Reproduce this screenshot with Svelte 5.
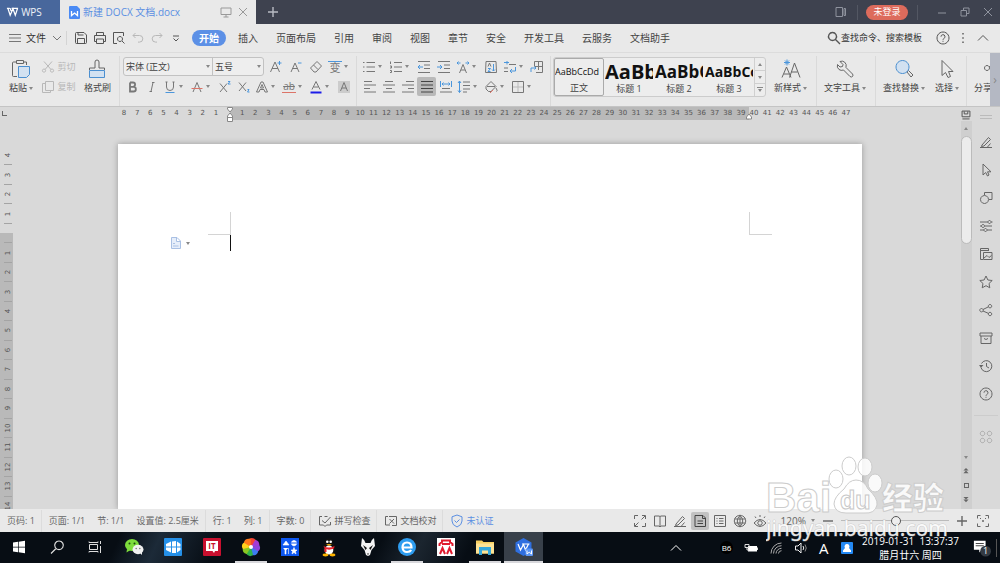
<script>
  const tabs = ['开始', '插入', '页面布局', '引用', '审阅', '视图', '章节', '安全', '开发工具', '云服务', '文档助手'];
  let activeTab = $state('开始');
  let font = $state('宋体 (正文)');
  let size = $state('五号');
  let style = $state('正文');
  let zoom = $state(120);

  // each icon is a list of [path, class], drawn on a 14 x 14 grid
  const icons = {
    menu: [['M1 3.5H13M1 7H13M1 10.5H13']],
    save: [['M1.5 2.5a1 1 0 0 1 1-1H10L12.5 4V11.500a1 1 0 0 1-1 1h-9a1 1 0 0 1-1-1ZM4 1.500V4H9.500M3.500 12.500V7.500H10.500V12.500']],
    print: [['M3.500 4.500V1.500H10.500V4.500M3.500 10.500H1.500V4.500H12.500V10.500H10.500M3.500 8H10.500V12.500H3.500Z']],
    preview: [['M5 12.500H1.500V1.500H11.500V5'], ['M8 5.500a2.500 2.500 0 1 0 .01 0M10 10L12.500 12.500']],
    undo: [['M4.500 2L2 4.500L4.500 7M2 4.500H8.500a3.300 3.300 0 0 1 0 6.600H7']],
    redo: [['M9.500 2L12 4.500L9.500 7M12 4.500H5.500a3.300 3.300 0 0 0 0 6.600H7']],
    more: [['M4 5H10M4.500 7.500L7 10L9.500 7.500']],
    down: [['M3 5L7 9L11 5']],
    up: [['M2 9.500L7 4.500L12 9.500']],
    find: [['M5.500 1.500a4 4 0 1 0 .01 0M8.500 8.500L13 13', 'heavy']],
    help: [['M7 1a6 6 0 1 0 .01 0M5 5.700a2 2 0 1 1 2.800 1.800Q7 8 7 8.800M7 9.800V10.800']],
    dots: [['M6.300 2H7.700V3.400H6.300ZM6.300 6.300H7.700V7.700H6.300ZM6.300 10.600H7.700V12H6.300Z', 'solid']],
    screen: [['M2 3H12V9.500H2ZM7 9.500V12M4.500 12H9.500']],
    close: [['M3 3L11 11M11 3L3 11']],
    plus: [['M7 2V12M2 7H12', 'heavy']],
    minus: [['M2 7H12', 'heavy']],
    min: [['M3 8H11']],
    restore: [['M3 5.500H8.500V11H3ZM5.500 5.500V3H11V8.500H8.500']],
    device: [['M2 2.500H8.500V11.500H2ZM10 3.500H11.500V10.500H10Z']],
    cut: [['M3 1.500L10 9.500M11 1.500L4 9.500M3 9a1.600 1.600 0 1 0 .01 0M11 9a1.600 1.600 0 1 0 .01 0']],
    copy: [['M4.500 1.500H12.500V10.500H4.500ZM4.500 3.500H1.500V12.500H9.500V10.500']],
    growFont: [['M1.500 12L6 2L10.500 12M3 8.500H9'], ['M10.500 1V5M8.500 3H12.500', 'blue']],
    shrinkFont: [['M2 12L6 3L10 12M3.500 8.500H8.500'], ['M9 3H12.500', 'blue']],
    eraser: [['M1.500 8L8 1.500L12.500 6L7 12H5ZM4.500 5L9 9.500']],
    bold: [['M4 2.500V11.500H7.500a2.300 2.300 0 0 0 0-4.700H4M4 2.500H7a2.100 2.100 0 0 1 0 4.200', 'bold']],
    italic: [['M8 2.500L6 11.500M7 2.500H9.500M4.500 11.500H7']],
    underline: [['M3.500 2V7a3.500 3.500 0 0 0 7 0V2M2.500 2H4.500M9.500 2H11.500'], ['M2.500 12.500H11.500', 'blue']],
    strike: [['M3 12L7 2.500L11 12'], ['M1.500 8.500H12.500', 'red']],
    sup: [['M2 3.500L9 12M9 3.500L2 12'], ['M10 1.500H12L10 4H12.500', 'blue']],
    sub: [['M2 2.500L9 11M9 2.500L2 11'], ['M10.500 9.500H12L10.500 12H12.500', 'blue']],
    effect: [['M1.500 12L6 2H8L12.500 12H10L9 9.500H5L4 12ZM5.500 8L7 4.500L8.500 8Z']],
    colour: [['M3 9.500L7 1.500L11 9.500M4.500 7H9.500'], ['M1.500 12.500H12.500', 'ink']],
    shade: [['M1 1H13V13H1Z', 'tint'], ['M3.500 11L7 2.500L10.500 11M5 8H9']],
    bullets: [['M4.500 2.500H13M4.500 7H13M4.500 11.500H13M1 2.500H2.500M1 7H2.500M1 11.500H2.500']],
    numbers: [['M5 2.500H13M5 7H13M5 11.500H13M1.500 1.500V4M1 6H2.500V8H1M1 10.500H2.500V12.500H1']],
    outdent: [['M1 1.500H13M7 5H13M7 8.500H13M1 12.500H13'], ['M6 7H1M3 5L1 7L3 9', 'blue']],
    indent: [['M1 1.500H13M7 5H13M7 8.500H13M1 12.500H13'], ['M0 7H5M3 5L5 7L3 9', 'blue']],
    charWidth: [['M3.500 13L7 4.500L10.500 13M5 10H9'], ['M1 3H4.500M2.500 1.500L1 3L2.500 4.500M9.500 3H13M11.500 1.500L13 3L11.500 4.500', 'blue']],
    sort: [['M2 1.500H12L12.500 12.500H1.500ZM4 6.500L5.500 3L7 6.500'], ['M4 8.500H6.500L4 11.500H6.500M9.500 4V11M8 9.500L9.500 11L11 9.500', 'blue']],
    wrap: [['M6 4.500H13M1 8H5M1 11.500H5'], ['M1 2.500H6M4 1V4.500M12.500 7V11H7M9 9L7 11L9 13', 'blue']],
    grid: [['M4.500 6V1.500H12.500V12.500H6M4.500 6.500H12.500M8.500 1.500V10'], ['M1 12V8H6M4.500 6.500L6 8L4.500 9.500', 'blue']],
    left: [['M1 1.500H9M1 5H13M1 8.500H7M1 12H13']],
    center: [['M3 1.500H11M1 5H13M4 8.500H10M1 12H13']],
    right: [['M5 1.500H13M1 5H13M7 8.500H13M1 12H13']],
    justify: [['M1 1.500H13M1 5H13M1 8.500H13M1 12H13']],
    spread: [['M3 8.500H11M1 12H13'], ['M1.500 1V7M12.500 1V7M3 4H11M4.500 2.500L3 4L4.500 5.500M9.500 2.500L11 4L9.500 5.500', 'blue']],
    leading: [['M6 2H13M6 5.500H13M6 9H13M6 12H10'], ['M2.500 1V12.500M1 3L2.500 1L4 3M1 10.500L2.500 12.500L4 10.500', 'blue']],
    fill: [['M2 6.500L7 1.500L12 6.500L7 11.500H4.500L2 9ZM3 6.500H11M12 8Q14 11 12.500 11.500'], ['M6 13L9 10', 'red']],
    border: [['M7 2V12M2 7H12', 'pale'], ['M1.500 1.500H12.500V12.500H1.500Z']],
    pen: [['M1 12.500H13M3 10L9.500 2.500L11.500 4.500L5 11L2.500 11.500ZM8.500 12L11.500 8.500']],
    pointer: [['M4 1V12L6.700 9.500L8.500 13L10 12L8.500 8.800H12Z']],
    shapes: [['M5.500 4V1.500H13V8.500H10'], ['M5.500 4.500a4 4 0 1 0 .01 0']],
    sliders: [['M1 3H9M12 3H13.500M1 7H2.500M5.500 7H13M1 11H5M8 11H13M10.500 1.500a1.500 1.500 0 1 0 .01 0M4 5.500a1.500 1.500 0 1 0 .01 0M6.500 9.500a1.500 1.500 0 1 0 .01 0']],
    gallery: [['M4 12.500H1.500V1.500H9.500V4M1.500 3.500H9M4.500 5.500H13V12.500H4.500ZM5 11L8 8.500L10 10.500L12.500 8.500']],
    star: [['M7 1L8.900 5L13.200 5.500L10 8.500L10.800 12.800L7 10.700L3.200 12.800L4 8.500L.8 5.500L5.100 5Z']],
    share: [['M2.500 5.500a1.700 1.700 0 1 0 .01 0M11 1.500a1.700 1.700 0 1 0 .01 0M11 9.300a1.700 1.700 0 1 0 .01 0M4 6.500L9.500 3.800M4 8L9.500 10.400']],
    box: [['M1 2H13V5H1ZM2 5V12.500H12V5M5 7.500Q7 9.500 9 7.500']],
    history: [['M2.500 4.500A5.500 5.500 0 1 1 2 8.500M7.500 4V7.500L10 9'], ['M0 6H4.500L2 8.800Z', 'solid']],
    apps: [['M3.500 1.300a2.200 2.200 0 1 0 .01 0M10.500 1.300a2.200 2.200 0 1 0 .01 0M3.500 8.300a2.200 2.200 0 1 0 .01 0M10.500 8.300a2.200 2.200 0 1 0 .01 0']],
    spell: [['M4 2.500H1.500V11H5.500L7 12.500L8.500 11H12.500V8M4 6.500L7 9L12.500 3M6.500 2.500H9.500']],
    proof: [['M4 2.500H1.500V11H6M5 2.500H12.500V11.500H8M5.500 5L10 9.500M10 5L5.500 9.500']],
    shield: [['M7 1L12 2.800V7Q12 11 7 13Q2 11 2 7V2.800ZM4.500 6.500L6.500 8.500L9.500 5.500']],
    expand: [['M1.500 5V1.500H5M9 1.500H12.500V5M12.500 9V12.500H9M5 12.500H1.500V9M2 12L5.500 8.500M12 2L8.500 5.500']],
    book: [['M1.500 2H6Q7 2 7 3Q7 2 8 2H12.500V12H8L7 13L6 12H1.500ZM7 3V12.500']],
    page: [['M2 1.500H10L12.500 4V12.500H2ZM9.500 1.500V4.500H12.500M4.500 7H10M4.500 9.500H10']],
    outline: [['M1.500 1.500H12.500V12.500H1.500ZM6 4.500H10.500M6 7H10.500M6 9.500H10.500M3.500 4.500H4.500M3.500 7H4.500M3.500 9.500H4.500']],
    globe: [['M7 1.300a5.700 5.700 0 1 0 .01 0M7 1.300Q1.500 7 7 12.700Q12.500 7 7 1.300M1.500 5H12.500M1.500 9H12.500M7 1.300V12.700']],
    eye: [['M1 9Q7 2 13 9Q7 16 1 9M7 6.800a2.200 2.200 0 1 0 .01 0M7 3V1M3 4L2 2.500M11 4L12 2.500']],
    focus: [['M1.500 4.500V1.500H4.500M9.500 1.500H12.500V4.500M12.500 9.500V12.500H9.500M4.500 12.500H1.500V9.500M7 6V8M6 7H8M5 5L4 4M9 5L10 4']],
    disk: [['M1.500 1.500H12.500V9.500H1.500ZM4.500 2V5.500H9.500V2M2 12.500H12', 'heavy']],
  };

  const fontTop = [{ icon: 'growFont' }, { icon: 'shrinkFont' }, { icon: 'eraser' }, { icon: 'phonetic', drop: true }];
  const fontBottom = [
    { icon: 'bold' },
    { icon: 'italic' },
    { icon: 'underline', drop: true },
    { icon: 'strike', drop: true },
    { icon: 'sup' },
    { icon: 'sub' },
    { icon: 'effect', drop: true },
    { icon: 'marker', drop: true },
    { icon: 'colour', drop: true },
    { icon: 'shade' },
  ];
  const paraTop = [
    { icon: 'bullets', drop: true },
    { icon: 'numbers', drop: true },
    { icon: 'outdent' },
    { icon: 'indent' },
    { icon: 'charWidth', drop: true },
    { icon: 'sort' },
    { icon: 'wrap', drop: true },
    { icon: 'grid' },
  ];
  const paraBottom = [
    { icon: 'left' },
    { icon: 'center' },
    { icon: 'right' },
    { icon: 'justify', on: true },
    { icon: 'spread' },
    { icon: 'leading', drop: true },
    { icon: 'fill', drop: true },
    { icon: 'border', drop: true },
  ];
  const styles = [
    { name: '正文', sample: 'AaBbCcDd', kind: 'body' },
    { name: '标题 1', sample: 'AaBb', kind: 'h1' },
    { name: '标题 2', sample: 'AaBbC', kind: 'h2' },
    { name: '标题 3', sample: 'AaBbCc', kind: 'h3' },
  ];
  const side = ['pen', 'pointer', 'shapes', 'sliders', 'gallery', 'star', 'share', 'box', 'history', 'help'];
  const views = ['expand', 'book', 'pen', 'page', 'outline', 'globe', 'eye'];

  const columns = Array.from({ length: 56 }, (_, i) => Math.abs(i - 8) || '');
  const rows = Array.from({ length: 19 }, (_, i) => Math.abs(i - 4) || '');
  const petals = ['#f44336', '#a43bd6', '#8e44dd', '#3d7bf0', '#2fb34a', '#8bc722', '#ffd21c', '#ff7a1a'];
</script>

{#snippet icon(name)}
  <svg class="icon" viewBox="0 0 14 14" aria-hidden="true">
    {#each icons[name] as [d, kind]}
      <path {d} class={kind} />
    {/each}
  </svg>
{/snippet}

{#snippet tool(item)}
  <button class="tool" class:drop={item.drop} class:on={item.on} aria-label={item.icon}>
    {#if item.icon === 'marker'}
      <span class="marker">ab</span>
    {:else if item.icon === 'phonetic'}
      <span class="phonetic">变</span>
    {:else}
      {@render icon(item.icon)}
    {/if}
    {#if item.drop}<i class="caret"></i>{/if}
  </button>
{/snippet}

<div class="window">
  <header class="titlebar">
    <button class="brand">
      <svg viewBox="0 0 14 10" aria-hidden="true">
        <path d="M1 1H4M2 1L4.500 8.500L7.500 1.500L10 8.500L12.500 1M6 1H13M5.500 4L4.500 1" />
      </svg>
      WPS
    </button>
    <div class="doc-tab">
      <svg class="doc-logo" viewBox="0 0 11 13" aria-hidden="true">
        <path d="M0 1a1 1 0 0 1 1-1H8L11 3V12a1 1 0 0 1-1 1H1a1 1 0 0 1-1-1Z" fill="#4a8af4" />
        <path d="M2.500 5V9.500L5.500 7L8.500 9.500V5" fill="none" stroke="#fff" stroke-width="1.300" />
      </svg>
      <span class="doc-name">新建 DOCX 文档.docx</span>
      <button aria-label="窗口">{@render icon('screen')}</button>
      <button aria-label="关闭文档">{@render icon('close')}</button>
    </div>
    <button class="new-tab" aria-label="新建">{@render icon('plus')}</button>
    <div class="window-tools">
      <button aria-label="设备">{@render icon('device')}</button>
      <div class="account"><button class="login">未登录</button></div>
      <button aria-label="最小化">{@render icon('min')}</button>
      <button aria-label="还原">{@render icon('restore')}</button>
      <button aria-label="关闭">{@render icon('close')}</button>
    </div>
  </header>

  <nav class="menubar">
    <button class="file">
      {@render icon('menu')}
      文件
      {@render icon('down')}
    </button>
    <div class="quick">
      <button aria-label="保存">{@render icon('save')}</button>
      <button aria-label="打印">{@render icon('print')}</button>
      <button aria-label="预览">{@render icon('preview')}</button>
      <button class="faded" aria-label="撤销">{@render icon('undo')}</button>
      <button class="faded" aria-label="恢复">{@render icon('redo')}</button>
      <button aria-label="更多">{@render icon('more')}</button>
    </div>
    <div class="tabs">
      {#each tabs as tab}
        <button class:active={tab === activeTab} onclick={() => (activeTab = tab)}>{tab}</button>
      {/each}
    </div>
    <label class="search">
      {@render icon('find')}
      <input type="search" placeholder="查找命令、搜索模板" aria-label="查找" />
    </label>
    <button class="menu-end" aria-label="帮助">{@render icon('help')}</button>
    <button class="menu-end" aria-label="选项">{@render icon('dots')}</button>
    <button class="menu-end" aria-label="收起">{@render icon('up')}</button>
  </nav>

  <section class="ribbon">
    <div class="group clipboard">
      <button class="big">
        <svg viewBox="0 0 20 20" aria-hidden="true">
          <path d="M6 3H2.500a1 1 0 0 0-1 1V16.500a1 1 0 0 0 1 1H6M12 3H15.500V6M5.500 1.500H12.500V4.500H5.500Z" />
          <path d="M7.500 7.500H18.500V15.500L15.500 18.500H7.500Z" class="glass" />
        </svg>
        <span>粘贴<i class="caret"></i></span>
      </button>
      <div class="stack faded">
        <button>{@render icon('cut')}剪切</button>
        <button>{@render icon('copy')}复制</button>
      </div>
      <button class="big">
        <svg viewBox="0 0 20 20" aria-hidden="true">
          <path d="M2.500 11V9H8V3a2 2 0 0 1 4 0V9H17.500V11" />
          <path d="M2.500 11.500H17.500V18.500H2.500Z" class="glass" />
        </svg>
        <span>格式刷</span>
      </button>
    </div>

    <div class="group font">
      <div class="row">
        <div class="combos">
          <span class="combo">
            <select bind:value={font} aria-label="字体">
              <option>宋体 (正文)</option>
              <option>黑体</option>
            </select>
            <i class="caret"></i>
          </span>
          <span class="combo small">
            <select bind:value={size} aria-label="字号">
              <option>五号</option>
              <option>四号</option>
            </select>
            <i class="caret"></i>
          </span>
        </div>
        <div class="font-top">
          {#each fontTop as item}{@render tool(item)}{/each}
        </div>
      </div>
      <div class="row">
        {#each fontBottom as item}{@render tool(item)}{/each}
      </div>
    </div>

    <div class="group paragraph">
      <div class="row spread">
        {#each paraTop as item}{@render tool(item)}{/each}
      </div>
      <div class="row">
        {#each paraBottom as item}{@render tool(item)}{/each}
      </div>
    </div>

    <div class="group style-group">
      <div class="gallery">
        {#each styles as s}
          <button class="style-cell" class:selected={s.name === style} onclick={() => (style = s.name)}>
            <span class="sample {s.kind}">{s.sample}</span>
            <span>{s.name}</span>
          </button>
        {/each}
        <div class="gallery-scroll">
          <button aria-label="上一行"><i class="caret flip"></i></button>
          <button aria-label="下一行"><i class="caret"></i></button>
          <button class="expand" aria-label="展开"><i class="caret"></i></button>
        </div>
      </div>
      <button class="big">
        <svg viewBox="0 0 20 20" aria-hidden="true">
          <path d="M1 18.500L5.500 8L10 18.500M3 15H8M8.500 18.500L13.500 4L19 18.500M10.500 13H16.500" />
          <path d="M6 .5V6.500M3 3.500H9M4 1.500L8 5.500M8 1.500L4 5.500" class="accent" />
        </svg>
        <span>新样式<i class="caret"></i></span>
      </button>
    </div>

    <div class="group tools">
      <button class="big">
        <svg viewBox="0 0 20 20" aria-hidden="true">
          <path d="M5 2.500L8 5.500L7.500 7.500L5 8L2.500 5.500Q1.500 8.500 4 10.500Q6 12 8.500 11L15 17.500Q16.500 18.500 17.500 17.500Q18.500 16 17.500 15L11 8.500Q12 5 9.500 3Q7.500 1.500 5 2.500Z" />
        </svg>
        <span>文字工具<i class="caret"></i></span>
      </button>
    </div>

    <div class="group search-group">
      <button class="big">
        <svg viewBox="0 0 20 20" aria-hidden="true">
          <path d="M13 13L14.500 11.500L19 16L17 18Z" />
          <path d="M8.500 1.500a6.500 6.500 0 1 0 .01 0Z" class="glass" />
        </svg>
        <span>查找替换<i class="caret"></i></span>
      </button>
      <button class="big">
        <svg viewBox="0 0 20 20" aria-hidden="true">
          <path d="M5 1.500V16.500L8.500 13.500L11 18.500L13.500 17.500L11.500 12.500H16Z" />
        </svg>
        <span>选择<i class="caret"></i></span>
      </button>
    </div>

    <div class="group cut-off">
      <button class="big">
        <svg viewBox="0 0 20 20" aria-hidden="true">
          <path d="M14 6.500a2.500 2.500 0 1 0 .01 0M16 8L20 5" />
        </svg>
        <span>分享</span>
      </button>
    </div>
    <button class="ribbon-next" aria-label="更多工具">›</button>
  </section>

  <main class="work">
    <div class="editor">
      <div class="ruler">
        <span class="tab-stop"></span>
        <div class="scale">
          <div class="numbers">
            {#each columns as n}<span>{n}</span>{/each}
          </div>
          <svg class="indent-mark" viewBox="0 0 8 15" aria-hidden="true">
            <path d="M1.500 .5H6.500V2L4 5L1.500 2ZM4 6L6.500 9V14.500H1.500V9ZM1.500 10.500H6.500" />
          </svg>
          <svg class="indent-mark end" viewBox="0 0 8 15" aria-hidden="true">
            <path d="M4 7L6.500 10V12H1.500V10Z" />
          </svg>
        </div>
      </div>
      <div class="canvas">
        <div class="side-ruler">
          <div class="side-numbers">
            {#each rows as n}<span><b>{n}</b></span>{/each}
          </div>
        </div>
        <div class="desk">
          <article class="page">
            <div class="corners"><span></span><span></span></div>
            <div class="line">
              <svg viewBox="0 0 10 12" aria-hidden="true">
                <path d="M.5 .5H6L9.500 4V11.500H.5ZM5.500 .5V4.500H9.500M2 6.500H4M2 9H7.500" />
              </svg>
              <i class="caret"></i>
              <span class="cursor"></span>
            </div>
          </article>
        </div>
      </div>
    </div>

    <div class="scrollbar">
      <span class="scroll-head">{@render icon('disk')}</span>
      <div class="track">
        <i class="caret flip"></i>
        <span class="thumb"></span>
        <div class="jump">
          <i class="caret"></i>
          <svg viewBox="0 0 6 7"><path d="M3 0L6 3H0ZM3 3L6 6H0Z" /></svg>
          <span class="square"></span>
          <svg viewBox="0 0 6 7"><path d="M0 0H6L3 3ZM0 3H6L3 6Z" /></svg>
        </div>
      </div>
    </div>

    <aside class="side">
      <span class="grip"></span>
      {#each side as name}
        <button aria-label={name}>{@render icon(name)}</button>
      {/each}
      <hr />
      <button class="faded" aria-label="应用">{@render icon('apps')}</button>
    </aside>
  </main>

  <footer class="status">
    <div class="cell"><span>页码: 1</span></div>
    <div class="cell"><span>页面: 1/1</span><span>节: 1/1</span><span>设置值: 2.5厘米</span></div>
    <div class="cell"><span>行: 1</span><span>列: 1</span></div>
    <div class="cell"><span>字数: 0</span></div>
    <div class="cell"><button>{@render icon('spell')}拼写检查</button></div>
    <div class="cell"><button>{@render icon('proof')}文档校对</button></div>
    <div class="cell verify"><button>{@render icon('shield')}未认证</button></div>
    <div class="views">
      {#each views as name}
        <button class:on={name === 'page'} aria-label={name}>{@render icon(name)}</button>
      {/each}
    </div>
    <button class="zoom-value">{zoom}%<i class="caret"></i></button>
    <button class="zoom-step" aria-label="缩小" onclick={() => (zoom -= 10)}>{@render icon('minus')}</button>
    <input class="zoom" type="range" min="10" max="227" bind:value={zoom} aria-label="缩放" />
    <button class="zoom-step" aria-label="放大" onclick={() => (zoom += 10)}>{@render icon('plus')}</button>
    <button class="zoom-fit" aria-label="适合">{@render icon('focus')}</button>
  </footer>

  <div class="taskbar">
    <div class="apps">
      <button aria-label="Windows">
        <svg viewBox="0 0 20 20"><path fill="#fff" d="M4 5.500L9 4.800V9.700H4ZM9.700 4.700L16 3.800V9.700H9.700ZM4 10.400H9V15.200L4 14.500ZM9.700 10.400H16V16.200L9.700 15.300Z" /></svg>
      </button>
      <button aria-label="搜索">
        <svg viewBox="0 0 20 20"><path fill="none" stroke="#ddd" stroke-width="1.200" d="M12 4a4.300 4.300 0 1 0 .01 0M9 11.500L4 16.500" /></svg>
      </button>
      <button aria-label="任务视图">
        <svg viewBox="0 0 20 20"><path fill="none" stroke="#ddd" d="M4.500 7.500H12.500V12.500H4.500ZM4 4.500V5.500H13V4.500M4 15.500V14.500H13V15.500M15.500 4V7M15.500 9V16" /></svg>
      </button>
      <button aria-label="微信">
        <svg viewBox="0 0 20 20">
          <ellipse cx="8" cy="8" rx="7" ry="6" fill="#7ddc3c" /><path d="M3 12L2.500 15.500L6.500 13Z" fill="#7ddc3c" />
          <ellipse cx="14" cy="12.500" rx="5.500" ry="4.700" fill="#f1f1f1" /><path d="M16 16L18 18V14Z" fill="#f1f1f1" />
          <circle cx="5.500" cy="6.500" r="1" fill="#1d4a10" /><circle cx="10.500" cy="6.500" r="1" fill="#1d4a10" />
          <circle cx="12.200" cy="11.500" r=".8" fill="#777" /><circle cx="15.800" cy="11.500" r=".8" fill="#777" />
        </svg>
      </button>
      <button aria-label="魔方">
        <svg viewBox="0 0 20 20">
          <rect x="1" y="1" width="18" height="18" rx="1" fill="#2590e8" />
          <path d="M3 7L8 4.500V9.500H3ZM9 4.500L13 4V9.500H9ZM14 4.500L17.500 7V9.500H14ZM3 10.500H8V15.500L3 13ZM9 10.500H13V16H9ZM14 10.500H17.500V13L14 15.500Z" fill="#fff" />
        </svg>
      </button>
      <button aria-label="IT">
        <svg viewBox="0 0 20 20">
          <rect x="1" y="1" width="18" height="18" rx="1" fill="#c8102f" />
          <path d="M4 4H16V14H13L12 16L10.500 14H4Z" fill="#fff" />
          <text x="10" y="12" text-anchor="middle" font-size="8" font-weight="bold" fill="#c8102f">IT</text>
        </svg>
      </button>
      <button class="running" aria-label="浏览器">
        <svg viewBox="0 0 20 20">
          {#each petals as fill, i}
            <path d="M10 10L8 2Q12 -1 15.500 4Z" {fill} transform="rotate({i * 45} 10 10)" />
          {/each}
          <circle cx="10" cy="10" r="2" fill="#fff" />
        </svg>
      </button>
      <button aria-label="工具箱">
        <svg viewBox="0 0 20 20">
          <rect x="1" y="1" width="18" height="18" fill="#0d57f0" />
          <path d="M3 8H9L6 4ZM14 3.500a2.700 2.700 0 1 0 .01 0M3.500 11L5 13V17H6V13L8 11M8.500 11V17M14 10.500L15 13H17L15.500 14.500L16 17L14 15.500L12 17L12.500 14.500L11 13H13Z" fill="#fff" stroke="#fff" stroke-width=".6" />
          <path d="M11 6H17" stroke="#0d57f0" />
        </svg>
      </button>
      <button aria-label="QQ">
        <svg viewBox="0 0 20 20">
          <ellipse cx="10" cy="11.500" rx="6.500" ry="6.500" fill="#111" /><ellipse cx="10" cy="6" rx="4.500" ry="4.800" fill="#111" />
          <ellipse cx="10" cy="13" rx="4.300" ry="4.500" fill="#fff" />
          <circle cx="8.300" cy="4.800" r="1.300" fill="#fff" /><circle cx="11.700" cy="4.800" r="1.300" fill="#fff" />
          <path d="M7 7.500Q10 6.500 13 7.500Q10 9.500 7 7.500Z" fill="#ffb400" />
          <path d="M4.500 9Q10 12 15.500 9L15 11.500Q10 13.500 7.500 12V15H5.500V11Z" fill="#e8212b" />
          <ellipse cx="6.500" cy="18" rx="3" ry="1.400" fill="#ffb400" /><ellipse cx="13.500" cy="18" rx="3" ry="1.400" fill="#ffb400" />
        </svg>
      </button>
      <button aria-label="foobar2000">
        <svg viewBox="0 0 20 20">
          <path d="M4 1Q7 3 7.500 6H12.500Q13 3 16 1L17 9L13.500 13L12 18L10 19L8 18L6.500 13L3 9Z" fill="#f4f4f4" />
          <path d="M5 8L9 11L7.500 13ZM15 8L11 11L12.500 13ZM9 16.500H11L10 18Z" fill="#111" />
        </svg>
      </button>
      <button class="running" aria-label="Internet">
        <svg viewBox="0 0 20 20">
          <circle cx="10" cy="10" r="9" fill="#2e9df0" />
          <path d="M5.500 10.500H14.500Q14.500 5.500 10 5.500T5.500 10.500Q6 15 10 15Q13 15 14.200 13" fill="none" stroke="#fff" stroke-width="2.200" />
        </svg>
      </button>
      <button aria-label="邮件">
        <svg viewBox="0 0 20 20">
          <rect x="1" y="1" width="18" height="18" fill="#fff" />
          <path d="M3.500 9V7L6 5V3.500H14V5L16.500 7V9M6 7H14M4 17L6.500 11L9 17M11 17L13.500 11L16 17" fill="none" stroke="#e01b2f" stroke-width="2" />
        </svg>
      </button>
      <button class="running" aria-label="资源管理器">
        <svg viewBox="0 0 20 20">
          <path d="M1 3.500H7L8.500 5H19V16.500H1Z" fill="#f6cf61" /><path d="M1 6.500H19V16.500H1Z" fill="#fde396" />
          <path d="M4 10H16V18H13V13.500H7V18H4Z" fill="#35a8dc" />
        </svg>
      </button>
      <button class="running current" aria-label="WPS 文字">
        <svg viewBox="0 0 20 20">
          <path d="M9.500 1L17.500 5.500V14.500L9.500 19L1.500 14.500V5.500Z" fill="#2f6fe0" />
          <path d="M4 7L6.500 13L9.500 7.500L11.500 13L14.500 7M8 7H15.500" fill="none" stroke="#fff" stroke-width="1.200" />
          <rect x="11.500" y="11.500" width="7.500" height="7.500" rx="1" fill="#5a95f5" />
          <path d="M13 13.500V17L15.200 15.200L17.500 17V13.500" fill="none" stroke="#fff" />
        </svg>
      </button>
    </div>
    <div class="tray">
      <button class="tray-up" aria-label="显示隐藏的图标">{@render icon('up')}</button>
      <span class="badge">B6</span>
      <svg viewBox="0 0 14 14"><path d="M4 5H13V10.500H4Z" fill="#fff" /><path d="M1 3.500H5V6.500H1ZM3 6.500V9H5M13.500 6.500V9" fill="none" stroke="#ddd" /></svg>
      <svg viewBox="0 0 14 14"><path d="M2 12.500A10.500 10.500 0 0 1 12.500 2M4.500 12.500A8 8 0 0 1 12.500 4.700M7 12.500A5.500 5.500 0 0 1 12.500 7.300M9.500 12.500A3 3 0 0 1 12.500 9.700" fill="none" stroke="#aaa" /></svg>
      <svg viewBox="0 0 14 14"><path d="M1.500 5H4L7 2V12L4 9H1.500ZM9 5Q10.500 7 9 9" fill="none" stroke="#eee" /><path d="M11 3.500Q13.500 7 11 10.500" fill="none" stroke="#888" /></svg>
      <span class="ime">A</span>
      <svg class="contact" viewBox="0 0 14 14"><rect x="1" y="1" width="12" height="12" rx="1" fill="#2389f5" /><path d="M7 3a2.500 2.500 0 0 1 2 4L11 9.500V11H3V9.500L5 7A2.500 2.500 0 0 1 7 3Z" fill="#fff" /></svg>
      <div class="clock">
        <span>2019-01-31&nbsp; 13:37:37</span>
        <span>腊月廿六 周四</span>
      </div>
      <button class="notice" aria-label="通知">
        <svg viewBox="0 0 20 20">
          <path d="M1 2H14V12H10L7 15V12H1Z" fill="#fff" /><path d="M3 5H12M3 7.500H12" stroke="#333" />
          <circle cx="14" cy="13.500" r="6" fill="#333a42" />
          <text x="14" y="17" text-anchor="middle" font-size="10" fill="#fff">1</text>
        </svg>
      </button>
    </div>
  </div>

  <svg class="watermark" viewBox="0 0 182 92" aria-hidden="true">
    <g class="mark">
      <text x="0" y="57" font-size="42" font-weight="bold" font-family="Liberation Sans">Bai</text>
      <ellipse cx="70" cy="24" rx="7" ry="9" />
      <ellipse cx="83" cy="11" rx="7" ry="9" />
      <ellipse cx="99" cy="12" rx="7" ry="9" />
      <ellipse cx="109" cy="28" rx="7" ry="9" />
      <path d="M90 25Q98 25 102 34Q112 43 111 50Q109 59 98 58H80Q69 58 68 49Q68 42 78 34Q83 25 90 25Z" />
      <text x="116" y="54" font-size="31" font-weight="900" font-family="Noto Sans CJK SC">经验</text>
    </g>
    <text class="du" x="74" y="54" font-size="25" font-weight="bold" font-family="Liberation Sans">du</text>
    <text class="url" x="0" y="81" font-size="21" font-family="Noto Sans">jingyan.baidu.com</text>
  </svg>
</div>

<style>
  :global(body) {
    margin: 0;
  }

  .window {
    position: relative;
    display: flex;
    flex-direction: column;
    height: 100vh;
    overflow: hidden;
    background: #d9d9d9;
    color: #444;
    font: 9px/14px 'Open Sans', 'Noto Sans CJK SC', sans-serif;
  }

  button,
  select,
  input {
    margin: 0;
    padding: 0;
    border: 0;
    background: none;
    color: inherit;
    font: inherit;
  }

  button {
    display: flex;
    align-items: center;
    justify-content: center;
    white-space: nowrap;
  }

  .icon {
    flex: none;
    width: 14px;
    height: 14px;
    fill: none;
    stroke: currentColor;
    stroke-width: 1;
  }
  .icon .heavy { stroke-width: 1.4; }
  .icon .bold { stroke-width: 1.8; }
  .icon .blue { stroke: #4b96dc; }
  .icon .red { stroke: #dc7468; }
  .icon .pale { stroke: #bbb; }
  .icon .ink { stroke: #1c1ce8; stroke-width: 2; }
  .icon .tint { fill: #ccc; stroke: none; }
  .icon .solid { fill: currentColor; stroke: none; }

  .caret {
    flex: none;
    width: 0;
    height: 0;
    border: 2px solid transparent;
    border-top: 3px solid #888;
    border-bottom: 0;
  }
  .caret.flip {
    transform: rotate(180deg);
  }
  .faded {
    color: #b8b8b8;
  }

  /* title bar */
  .titlebar {
    display: flex;
    flex: none;
    height: 24px;
    background: #3e424f;
    color: #b9bcc4;
  }
  .brand {
    gap: 2px;
    width: 60px;
    padding-right: 12px;
    background: #48679c;
    color: #eef2f8;
    font-size: 10px;
  }
  .brand svg {
    width: 13px;
    height: 10px;
    fill: none;
    stroke: #fff;
    stroke-width: 1.3;
  }
  .doc-tab {
    display: flex;
    align-items: center;
    width: 196px;
    padding: 0 6px 0 9px;
    box-sizing: border-box;
    background: #e9e9e9;
    color: #999;
  }
  .doc-logo {
    width: 11px;
    height: 13px;
    margin-right: 3px;
  }
  .doc-name {
    flex: 1;
    color: #5b8fe2;
    font-size: 10px;
  }
  .doc-tab button + button {
    margin-left: 3px;
  }
  .new-tab {
    width: 34px;
  }
  .window-tools {
    display: flex;
    flex: 1;
    align-items: center;
    justify-content: flex-end;
    gap: 9px;
    padding-right: 5px;
    color: #8f939e;
  }
  .account {
    margin-right: 8px;
    padding: 0 9px 0 8px;
    border: 1px solid #535763;
    border-width: 0 1px;
  }
  .login {
    width: 42px;
    height: 15px;
    border-radius: 8px;
    background: #dd6b5c;
    color: #fff;
  }

  /* menu bar */
  .menubar {
    display: flex;
    flex: none;
    align-items: center;
    height: 28px;
    background: #e9e9e9;
    color: #555;
    font-size: 10px;
  }
  .file {
    gap: 4px;
    width: 67px;
    padding-left: 6px;
    box-sizing: border-box;
    border-right: 1px solid #d4d4d4;
    color: #333;
  }
  .file .icon {
    color: #777;
  }
  .quick {
    display: flex;
    gap: 5px;
    padding: 0 9px 0 7px;
  }
  .quick button {
    width: 14px;
  }
  .tabs {
    display: flex;
    flex: 1;
    gap: 18px;
    color: #444;
  }
  .tabs button.active {
    width: 34px;
    height: 16px;
    margin-right: -6px;
    border-radius: 8px;
    background: #5c90e6;
    color: #fff;
    font-weight: bold;
  }
  .search {
    display: flex;
    align-items: center;
    font-size: 9px;
  }
  .search input {
    width: 92px;
    outline: none;
  }
  .search input::placeholder {
    color: #333;
    opacity: 1;
  }
  .menu-end {
    width: 20px;
  }
  .menu-end:last-child {
    margin-right: 7px;
  }

  /* ribbon */
  .ribbon {
    display: flex;
    flex: none;
    height: 55px;
    border-top: 1px solid #dcdcdc;
    border-bottom: 1px solid #c4c4c4;
    box-sizing: border-box;
    background: #e9e9e9;
    overflow: hidden;
  }
  .group {
    display: flex;
    flex: none;
    align-items: flex-start;
    margin: 3px 0 0;
    padding: 1px 6px 0;
    border-right: 1px solid #dadada;
  }
  .big {
    flex-direction: column;
    gap: 2px;
    padding-top: 2px;
  }
  .big svg {
    width: 20px;
    height: 20px;
    fill: none;
    stroke: #666;
  }
  .big .glass {
    fill: #d2e1f1;
    stroke: #4b8fd0;
  }
  .big .accent {
    stroke: #4b96dc;
  }
  .big span {
    display: flex;
    align-items: center;
    gap: 2px;
  }
  .clipboard {
    width: 102px;
    justify-content: space-between;
    padding: 1px 8px 0 9px;
  }
  .stack {
    display: flex;
    flex-direction: column;
    gap: 6px;
    padding-top: 3px;
  }
  .stack button {
    gap: 2px;
  }
  .font,
  .paragraph {
    flex-direction: column;
    gap: 1px;
    padding: 1px 3px 0;
  }
  .font {
    width: 230px;
  }
  .paragraph {
    width: 187px;
  }
  .row {
    display: flex;
    align-self: stretch;
    align-items: center;
    height: 19px;
  }
  .spread,
  .font-top {
    justify-content: space-between;
  }
  .font-top {
    display: flex;
    flex: 1;
  }
  .combos {
    display: flex;
    height: 19px;
    margin-right: 2px;
    border: 1px solid #c2c2c2;
    border-radius: 3px;
    box-sizing: border-box;
    background: #eee;
  }
  .combo {
    display: flex;
    align-items: center;
    width: 88px;
    padding: 0 2px;
    box-sizing: border-box;
  }
  .combo select {
    flex: 1;
    min-width: 0;
    appearance: none;
  }
  .combo.small {
    width: 51px;
    border-left: 1px solid #c2c2c2;
  }
  .tool {
    flex: none;
    width: 19px;
    height: 19px;
    border-radius: 2px;
    color: #777;
  }
  .tool.drop {
    justify-content: flex-start;
    gap: 2px;
    width: 27px;
    padding-left: 2px;
  }
  .tool.on {
    background: #b9b9b9;
    color: #444;
  }
  .marker {
    width: 14px;
    height: 12px;
    border-bottom: 1px solid #dc7468;
    box-sizing: border-box;
    line-height: 10px;
    font-size: 10px;
    text-decoration: line-through;
  }
  .phonetic {
    width: 14px;
    border-top: 1px solid #4b96dc;
    line-height: 11px;
    font-size: 11px;
  }

  .style-group {
    padding: 1px 9px 0 2px;
    gap: 8px;
  }
  .gallery {
    display: flex;
    height: 40px;
    border: 1px solid #ccc;
    border-radius: 3px;
    box-sizing: border-box;
    background: #ededed;
  }
  .style-cell {
    flex-direction: column;
    align-items: center;
    width: 50px;
    padding: 0 1px;
    overflow: hidden;
    color: #444;
  }
  .style-cell.selected {
    padding: 0;
    border: 1px solid #aaa;
    border-radius: 2px;
  }
  .sample {
    align-self: flex-start;
    max-width: 48px;
    height: 23px;
    overflow: hidden;
    color: #111;
    line-height: 25px;
  }
  .sample.body { font-size: 9px; }
  .sample.h1 { font-size: 20px; font-weight: bold; }
  .sample.h2 { font-size: 17px; font-weight: bold; }
  .sample.h3 { font-size: 14px; font-weight: bold; }
  .gallery-scroll {
    display: flex;
    flex-direction: column;
    width: 10px;
    border-left: 1px solid #d0d0d0;
  }
  .gallery-scroll button {
    flex: 1;
  }
  .gallery-scroll button + button {
    border-top: 1px solid #d0d0d0;
  }
  .expand .caret::before {
    content: '';
    display: block;
    width: 6px;
    height: 1px;
    margin: -5px 0 0 -3px;
    background: #888;
  }
  .tools {
    padding: 1px 9px 0 7px;
  }
  .search-group {
    gap: 10px;
    padding: 1px 7px 0;
  }
  .cut-off {
    flex: 1;
    width: 0;
    min-width: 0;
    overflow: hidden;
    border: 0;
  }
  .ribbon-next {
    flex: none;
    width: 10px;
    background: #b4b8c3;
    color: #888;
    font-size: 12px;
  }

  /* work area */
  .work {
    display: flex;
    flex: 1;
    min-height: 0;
  }
  .editor {
    display: flex;
    flex: 1;
    flex-direction: column;
    min-width: 0;
  }
  .ruler {
    display: flex;
    flex: none;
    height: 13px;
    color: #555;
    font: 7px/13px 'DejaVu Sans', sans-serif;
  }
  .tab-stop {
    flex: none;
    width: 4px;
    height: 4px;
    margin: 4px 12px 0 2px;
    border: 1px solid #666;
    border-width: 0 0 1px 1px;
  }
  .scale {
    position: relative;
    flex: none;
    width: 744px;
    height: 13px;
    margin: 0 auto;
    background: linear-gradient(#b9b9b9, #b9b9b9) 112px 0 / 519px 13px no-repeat;
  }
  .numbers {
    display: grid;
    grid-template-columns: repeat(56, 1fr);
    width: 735px;
    text-align: center;
  }
  .indent-mark {
    position: absolute;
    top: 0;
    left: 108px;
    width: 8px;
    height: 15px;
    fill: #fff;
    stroke: #888;
  }
  .indent-mark.end {
    left: 627px;
  }
  .canvas {
    display: flex;
    flex: 1;
    min-height: 0;
  }
  .side-ruler {
    flex: none;
    width: 13px;
    padding-top: 26px;
    box-sizing: border-box;
    overflow: hidden;
    background: linear-gradient(#b9b9b9, #b9b9b9) 0 113px no-repeat;
  }
  .side-numbers {
    display: grid;
    grid-template-rows: repeat(19, 1fr);
    height: 370px;
    color: #555;
    font: 7px/8px 'DejaVu Sans', sans-serif;
  }
  .side-numbers span {
    display: flex;
    align-items: center;
    justify-content: center;
    width: 8px;
    margin-left: 4px;
    border-bottom: 1px solid #a4a4a4;
  }
  .side-numbers b {
    font-weight: normal;
    transform: rotate(-90deg);
  }
  .desk {
    display: flex;
    flex: 1;
    justify-content: center;
    padding: 24px 0 0 6px;
    overflow: hidden;
  }
  .page {
    width: 744px;
    padding-top: 68px;
    background: #fff;
    box-shadow: 0 0 6px rgba(0, 0, 0, 0.3);
  }
  .corners {
    display: flex;
    justify-content: space-between;
    padding: 0 90px;
  }
  .corners span {
    width: 22px;
    height: 22px;
    border: 1px solid #d4d4d4;
    border-width: 0 1px 1px 0;
  }
  .corners span + span {
    border-width: 0 0 1px 1px;
  }
  .line {
    display: flex;
    align-items: center;
    margin-left: 53px;
  }
  .line svg {
    width: 10px;
    height: 12px;
    margin-right: 5px;
    fill: #e6eefa;
    stroke: #a9c0e4;
  }
  .cursor {
    width: 1px;
    height: 16px;
    margin-left: 40px;
    background: #111;
  }

  .scrollbar {
    display: flex;
    flex: none;
    flex-direction: column;
    align-items: center;
    width: 12px;
  }
  .scroll-head {
    display: flex;
    padding: 3px 0 1px;
    color: #555;
  }
  .scroll-head .icon {
    width: 10px;
    height: 10px;
  }
  .track {
    display: flex;
    flex: 1;
    flex-direction: column;
    align-items: center;
    width: 11px;
    padding: 6px 0;
    background: #cfcfcf;
  }
  .thumb {
    width: 9px;
    height: 106px;
    margin-top: 6px;
    border: 1px solid #bbb;
    border-radius: 6px;
    background: #ececec;
  }
  .jump {
    display: flex;
    flex-direction: column;
    align-items: center;
    gap: 9px;
    margin-top: auto;
  }
  .jump svg {
    width: 6px;
    height: 6px;
    fill: #666;
  }
  .square {
    width: 3px;
    height: 3px;
    border: 1px solid #666;
  }
  .side {
    display: flex;
    flex: none;
    flex-direction: column;
    align-items: center;
    width: 28px;
    color: #666;
  }
  .side button {
    width: 28px;
    height: 28px;
  }
  .grip {
    width: 12px;
    height: 2px;
    margin: 8px 0 9px;
    border: 1px solid #bbb;
    border-width: 1px 0;
  }
  .side hr {
    width: 24px;
    margin: 7px 0;
    border: 0;
    border-top: 1px solid #ccc;
  }
  .side .faded {
    color: #aaa;
  }

  /* status bar */
  .status {
    display: flex;
    flex: none;
    align-items: center;
    height: 23px;
    background: #e9e9e9;
    color: #666;
  }
  .cell {
    display: flex;
    gap: 12px;
    padding: 4px 6px 4px 7px;
    border-right: 1px solid #dcdcdc;
    white-space: nowrap;
  }
  .cell button {
    gap: 2px;
  }
  .cell.verify {
    border: 0;
    color: #5b8fe2;
  }
  .views {
    display: flex;
    gap: 2px;
    margin-left: auto;
  }
  .views button {
    width: 18px;
    height: 18px;
    border-radius: 2px;
  }
  .views button.on {
    background: #c2c2c2;
    color: #444;
  }
  .zoom-value {
    gap: 5px;
    margin-left: 12px;
    font-size: 10px;
  }
  .zoom-step {
    margin: 0 6px;
  }
  .zoom {
    width: 108px;
    height: 12px;
    appearance: none;
    background: linear-gradient(#bbb, #bbb) center / 100% 1px no-repeat;
  }
  .zoom::-webkit-slider-thumb {
    width: 10px;
    height: 10px;
    appearance: none;
    border: 1px solid #555;
    border-radius: 50%;
    background: #eee;
  }
  .zoom-fit {
    margin: 0 10px 0 1px;
  }

  /* taskbar */
  .taskbar {
    display: flex;
    flex: none;
    justify-content: space-between;
    height: 31px;
    background:
      linear-gradient(115deg, transparent 12%, #1c2a38 16%, transparent 22%, transparent 38%, #1b252f 42%, transparent 47%),
      #070d14;
    color: #fff;
  }
  .apps {
    display: flex;
  }
  .apps button {
    width: 39px;
    border-bottom: 2px solid transparent;
    box-sizing: border-box;
  }
  .apps button:nth-child(-n + 3) {
    width: 38px;
  }
  .apps svg {
    width: 20px;
    height: 20px;
  }
  .apps .running {
    background: linear-gradient(#d8d8dc, #d8d8dc) center bottom / 32px 2px no-repeat border-box;
  }
  .apps .current {
    background: linear-gradient(#d8d8dc, #d8d8dc) center bottom / 39px 2px no-repeat border-box, #38404a;
  }
  .tray {
    display: flex;
    align-items: center;
  }
  .tray > svg {
    width: 14px;
    height: 14px;
    margin-right: 11px;
  }
  .tray > .contact {
    margin-right: 8px;
  }
  .tray-up {
    margin-right: 37px;
  }
  .badge {
    width: 13px;
    margin-right: 11px;
    border-radius: 7px;
    background: #000;
    line-height: 13px;
    font-size: 8px;
    text-align: center;
  }
  .ime {
    width: 11px;
    margin-right: 10px;
    font-size: 15px;
  }
  .clock {
    display: flex;
    flex-direction: column;
    align-items: center;
    font-size: 10px;
  }
  .notice {
    margin: 0 3px 0 14px;
    padding-right: 5px;
    border-right: 1px solid #555;
  }
  .notice svg {
    width: 18px;
    height: 18px;
  }

  .watermark {
    position: absolute;
    right: 52px;
    bottom: 16px;
    width: 182px;
    height: 92px;
    pointer-events: none;
  }
  .mark {
    fill: rgba(255, 255, 255, 0.85);
    stroke: #ccc;
  }
  .du {
    fill: #fff;
    stroke: #c8c8c8;
  }
  .url {
    fill: rgba(255, 255, 255, 0.9);
    stroke: rgba(170, 170, 170, 0.5);
    stroke-width: 1;
    paint-order: stroke;
  }
</style>
